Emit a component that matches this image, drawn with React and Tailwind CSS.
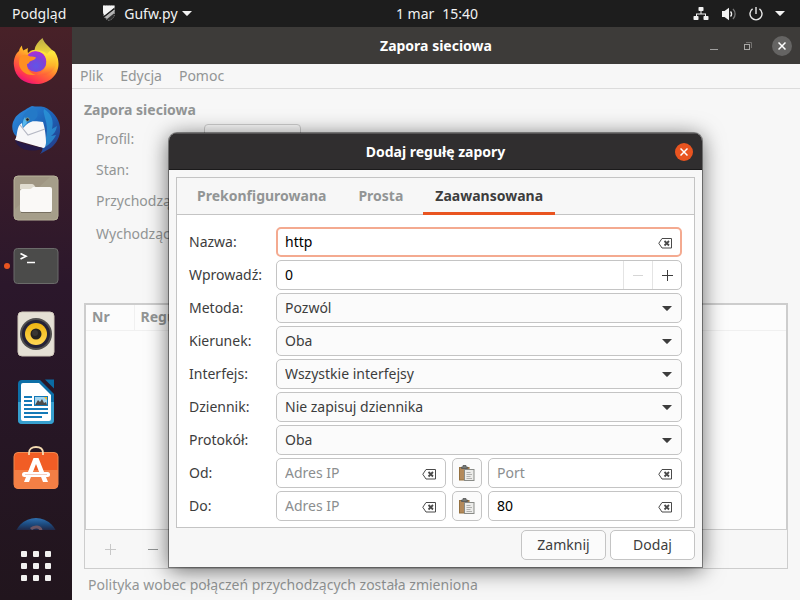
import React from "react";

function Triangle({ className }) {
  return (
    <svg viewBox="0 0 10 5" width="10" height="5" className={className} aria-hidden="true">
      <path d="M0 0h10L5.6 4.6a.8.8 0 0 1-1.2 0z" fill="currentColor" />
    </svg>
  );
}

function ShieldIcon() {
  return (
    <svg viewBox="0 0 14 17" width="14" height="17" aria-hidden="true">
      <path d="M1.500 1h11v8c0 3.500-2.500 5.500-5.500 6.500C4 14.500 1.500 12.500 1.500 9z" fill="#2e2e2e" stroke="#777" strokeWidth="1" strokeDasharray="1.500 1" />
      <path d="M1 .500h11.500v2L2.500 10.500C1.500 9.500 1 8 1 6z" fill="#f4f4f4" />
      <path d="M2.500 12L12.500 4v4L5 14z" fill="#b5b5b5" />
      <path d="M1.500 11.500L12.500 3v1.200L2.200 12.200z" fill="#1d1d1d" />
    </svg>
  );
}

function NetworkIcon() {
  return (
    <svg viewBox="0 0 16 14" width="16" height="14" fill="#f2f2f2" aria-hidden="true">
      <rect x="5.500" y="0" width="5" height="4" rx=".8" />
      <rect x="0.500" y="9" width="5" height="4" rx=".8" />
      <rect x="10.500" y="9" width="5" height="4" rx=".8" />
      <path d="M7.500 4h1v2.500H13v2.500h-1V7.500H4V9H3V6.500h4.500z" />
    </svg>
  );
}

function VolumeIcon() {
  return (
    <svg viewBox="0 0 16 14" width="16" height="14" aria-hidden="true">
      <path d="M1 4h2.500L8 .8v12.400L3.500 10H1z" fill="#f2f2f2" />
      <path d="M9.500 4.500a3.500 3.500 0 0 1 0 5" fill="none" stroke="#f2f2f2" strokeWidth="1.400" />
      <path d="M12 2a7 7 0 0 1 0 10" fill="none" stroke="#777" strokeWidth="1.300" />
    </svg>
  );
}

function PowerIcon() {
  return (
    <svg viewBox="0 0 14 14" width="14" height="14" fill="none" stroke="#e8e8e8" strokeWidth="1.400" aria-hidden="true">
      <path d="M7 0v7M3.600 1.900a6 6 0 1 0 6.800 0" />
    </svg>
  );
}

function CloseCross() {
  return (
    <svg viewBox="0 0 8 8" width="8" height="8" stroke="#fff" strokeWidth="1.500" aria-hidden="true">
      <path d="M.5.5l7 7M7.500.5l-7 7" />
    </svg>
  );
}

function ClearIcon() {
  return (
    <svg viewBox="0 0 14 11" width="14" height="11" aria-hidden="true">
      <path d="M4 .5h9.500v9.500H4L.8 5.250z" fill="none" stroke="#4a4a4a" strokeWidth="1" />
      <path d="M6.500 3l4.500 4.500M11 3L6.500 7.500" stroke="#4a4a4a" strokeWidth="1.800" />
    </svg>
  );
}

function PasteIcon() {
  return (
    <svg viewBox="0 0 16 17" width="16" height="17" aria-hidden="true">
      <rect x=".5" y="2.500" width="9.500" height="12.500" fill="#b3895a" stroke="#94703f" />
      <path d="M2.500 3.500V2h1.500V.5h3V2h1.500v1.500z" fill="#777c78" stroke="#555" strokeWidth=".8" />
      <rect x="5.500" y="4.500" width="9.500" height="11" fill="#ececea" stroke="#898b87" />
      <path d="M7.500 7.500h4M7.500 9.500h5.500M7.500 11.500h4M7.500 13.500h5.500" stroke="#b0b0ae" strokeWidth="1" />
    </svg>
  );
}

function FirefoxIcon() {
  return (
    <svg viewBox="0 0 48 48" width="48" height="48" aria-hidden="true">
      <defs>
        <linearGradient id="ffBody" x1=".85" y1=".05" x2=".25" y2="1">
          <stop offset="0" stopColor="#fff14a" />
          <stop offset=".3" stopColor="#ffc328" />
          <stop offset=".58" stopColor="#ff6f33" />
          <stop offset=".82" stopColor="#ff3650" />
          <stop offset="1" stopColor="#e80a82" />
        </linearGradient>
        <radialGradient id="ffGlobe" cx=".5" cy=".7" r=".7">
          <stop offset="0" stopColor="#5f55e8" />
          <stop offset=".55" stopColor="#7d43d8" />
          <stop offset="1" stopColor="#b02bd8" />
        </radialGradient>
        <linearGradient id="ffFlame" x1="0" y1="0" x2="0" y2="1">
          <stop offset="0" stopColor="#c9bd4a" />
          <stop offset=".4" stopColor="#ffe83d" />
          <stop offset=".75" stopColor="#ffb12b" />
          <stop offset="1" stopColor="#ff5a3c" />
        </linearGradient>
      </defs>
      <path d="M10 7.500c0 2 .4 3.500 1.500 5C13 11.500 14 11 16 10c-.5 2-.5 3.500 0 5 6-5 14-3 19 1 3-4 5-5 8-2 1.500 3 3.500 6 3.500 12C46.500 38 36 46 24.500 46 12 46 3 39 2 28 1 21 4 15 7 13c.3-2 1.500-4 3-5.500z" fill="url(#ffBody)" />
      <circle cx="24" cy="23.500" r="10.500" fill="url(#ffGlobe)" />
      <path d="M9 18c4-2.500 7-1 9 .5 2.500 0 5 .2 6 1-.5 2-4 3-6 4-1 1-1.500 2.500-3 2.500 0 6 4 10 9 10.500C15 39 8 33 7 26c0-3 0-6 2-8z" fill="#ff8f22" />
      <path d="M30.500 0C26 3.500 23 7.500 22.500 12c-2 0-4 .5-5 1.500 8-2 15 1 16.500 7 2 9-3 14-10 16 10 3 20-3 20.500-13 .5-6-2-9-5-12-3-3.500-7-6-9-11.500z" fill="url(#ffFlame)" opacity=".9" />
    </svg>
  );
}

function ThunderbirdIcon() {
  return (
    <svg viewBox="0 0 48 48" width="48" height="48" aria-hidden="true">
      <defs>
        <linearGradient id="tbBody" x1="0" y1="0" x2="1" y2="1">
          <stop offset="0" stopColor="#2f8fe0" />
          <stop offset=".5" stopColor="#1d64b9" />
          <stop offset="1" stopColor="#26347f" />
        </linearGradient>
      </defs>
      <path d="M20 0c4 1 8 0 12 1 8 3 15 11 16 20 1 9-4 18-11 22l-9 5c3-3 3-7 2-10L4 30C0 27-1 19 2 14c2-5 7-8 11-10 2-2 5-3 7-4z" fill="url(#tbBody)" />
      <path d="M32 3c8 5 10 12 8 20l5-3c-1 5-3 8-6 10l5-1c-3 6-7 10-14 14 4-8 7-19 3-31-1-4-2-7-1-9z" fill="#2c9bdc" opacity=".7" />
      <path d="M10 17c6-2 15-2 21-1 2 6 3 15 3 21-.5 3-1 5-3 5L3 34c3-5 1-14 7-17z" fill="#f7f7f9" />
      <path d="M8 19l8 10 17-6" fill="none" stroke="#b5b8c4" strokeWidth="1.200" />
      <path d="M20 2c5 0 7 5 5 9-2 4-8 5-11 8l-3 3c-2-5-1-12 3-16 2-2 4-3 6-4z" fill="#2479c7" />
      <path d="M13 11c-2 3-3 6-2 10l4-4z" fill="#57b7ec" />
      <circle cx="15.500" cy="13.500" r="1.600" fill="#0d1a38" stroke="#d8c45a" strokeWidth=".5" />
      <path d="M3 34c8 4 18 6 28 8l-1 1C16 47 6 43 3 34z" fill="#251a48" />
    </svg>
  );
}

function FilesIcon() {
  return (
    <svg viewBox="0 0 48 48" width="48" height="48" aria-hidden="true">
      <rect x="2" y="2" width="44" height="44" rx="4" fill="#9f9683" stroke="#b9b49b" />
      <path d="M2 36L38 3h6q2 0 2 2v38q0 3-3 3H5q-3 0-3-3z" fill="#aaa390" opacity=".6" />
      <path d="M8 14v-3q0-1 1-1h11q1 0 2 1l3 4H8z" fill="#e0dcd0" />
      <path d="M8 17q0-2 2-2h8q1 0 2-1l1-1h17q2 0 2 2v21q0 2-2 2H10q-2 0-2-2z" fill="#faf9f7" />
      <path d="M9 38.500h30" stroke="#777061" />
    </svg>
  );
}

function TerminalIcon() {
  return (
    <svg viewBox="0 0 48 48" width="48" height="48" aria-hidden="true">
      <rect x="2" y="6.500" width="44" height="35" rx="3.500" fill="#4b4b4a" stroke="#6b6b6a" />
      <path d="M8.500 11.500L14 14.300l-5.500 2.800" fill="none" stroke="#fff" strokeWidth="1.700" />
      <path d="M15 20.500h8" stroke="#fff" strokeWidth="1.500" />
    </svg>
  );
}

function RhythmboxIcon() {
  return (
    <svg viewBox="0 0 48 48" width="48" height="48" aria-hidden="true">
      <defs>
        <linearGradient id="rbCone" x1="0" y1="0" x2="0" y2="1">
          <stop offset="0" stopColor="#eeb411" />
          <stop offset="1" stopColor="#ffd755" />
        </linearGradient>
      </defs>
      <rect x="6" y="2" width="36" height="44" rx="4" fill="#e5e0d5" stroke="#d2cabc" />
      <circle cx="24" cy="24" r="16" fill="#514f4e" />
      <circle cx="24" cy="24" r="14" fill="#252337" />
      <circle cx="24" cy="24" r="11" fill="url(#rbCone)" />
      <circle cx="24" cy="24" r="5.500" fill="#252320" />
      <circle cx="23" cy="23" r="3" fill="#393633" />
    </svg>
  );
}

function WriterIcon() {
  return (
    <svg viewBox="0 1 48 48" width="48" height="48" aria-hidden="true">
      <path d="M10 3h18l14 14v26q0 4-4 4H10q-4 0-4-4V7q0-4 4-4z" fill="#0d6fa7" />
      <path d="M6 25h36v18q0 4-4 4H10q-4 0-4-4z" fill="#379fce" />
      <path d="M33 2.500h9v9z" fill="#0a6ba3" />
      <path d="M11 6h16l12 12v24q0 2-2 2H11q-2 0-2-2V8q0-2 2-2z" fill="#fff" />
      <path d="M12 20h8M12 24h8M12 28h8M12 32h24M12 36h24M12 40h18" stroke="#147ab8" strokeWidth="2" />
      <rect x="22" y="19" width="14" height="10" fill="#147ab8" />
      <path d="M23 20h12v8H23z" fill="#a5d5ee" />
      <path d="M23 28l3-5 2 2 2-3 2 4 2-1 1 3z" fill="#4b4b4b" />
      <path d="M32 20h3v3z" fill="#f4ba24" />
    </svg>
  );
}

function SoftwareIcon() {
  return (
    <svg viewBox="0 2 48 48" width="48" height="48" aria-hidden="true">
      <rect x="2" y="8.500" width="44" height="36" rx="4" fill="#f15d25" stroke="#ee8a50" />
      <path d="M2 26h44v14.500q0 4-4 4H6q-4 0-4-4z" fill="#f37f45" />
      <path d="M17 11V9c0-4 3-6 7-6s7 2 7 6v2" fill="none" stroke="#f4dab1" strokeWidth="1.800" />
      <path d="M21.500 14h5l9.500 24h-5L24 20l-7 18h-5z" fill="#fff" />
      <rect x="10" y="28" width="28" height="5" rx="2.500" fill="#fff" />
      <path d="M13 30.500h22" stroke="#f3cdc0" />
    </svg>
  );
}

function HelpIcon() {
  return (
    <svg viewBox="0 0 48 48" width="48" height="48" aria-hidden="true">
      <defs>
        <linearGradient id="hpBody" x1="0" y1="0" x2="0" y2="1">
          <stop offset="0" stopColor="#2f6fae" />
          <stop offset=".14" stopColor="#1c4b80" />
          <stop offset=".34" stopColor="#22162a" />
        </linearGradient>
      </defs>
      <circle cx="24" cy="26" r="22" fill="url(#hpBody)" />
      <path d="M19 15c3-3 10-3 10 2" fill="none" stroke="#6b5564" strokeWidth="3" />
    </svg>
  );
}

const dockItems = [
  { name: "Firefox", icon: <FirefoxIcon /> },
  { name: "Thunderbird", icon: <ThunderbirdIcon /> },
  { name: "Pliki", icon: <FilesIcon /> },
  { name: "Terminal", icon: <TerminalIcon />, running: true },
  { name: "Rhythmbox", icon: <RhythmboxIcon /> },
  { name: "LibreOffice Writer", icon: <WriterIcon /> },
  { name: "Ubuntu Software", icon: <SoftwareIcon /> },
  { name: "Pomoc", icon: <HelpIcon /> },
];

function TopPanel() {
  return (
    <header className="grid h-[27px] shrink-0 grid-cols-[1fr_auto_1fr] items-center bg-[#1d1d1d] px-3 text-[#f2f2f2]">
      <div className="flex items-center gap-9">
        <button type="button">Podgląd</button>
        <button type="button" className="flex items-center gap-1">
          <ShieldIcon />
          <span className="ml-1">Gufw.py</span>
          <Triangle />
        </button>
      </div>
      <time className="ml-[74px] flex gap-2">
        <span>1 mar</span>
        <span>15:40</span>
      </time>
      <button type="button" aria-label="Menu systemowe" className="flex items-center gap-3 justify-self-end">
        <NetworkIcon />
        <VolumeIcon />
        <PowerIcon />
        <Triangle className="mr-[3px]" />
      </button>
    </header>
  );
}

function Dock() {
  return (
    <nav className="flex w-[72px] shrink-0 flex-col bg-linear-to-b from-[#482128] via-[#2b172b] via-45% to-[#21151d]">
      <ul className="flex min-h-0 flex-1 flex-col gap-5 overflow-hidden pt-[11px]">
        {dockItems.map((item) => (
          <li key={item.name} className="relative flex h-12 shrink-0 justify-center">
            {item.running && <span className="absolute top-[21px] left-1 size-1.5 rounded-full bg-[#e95420]" />}
            <button type="button" aria-label={item.name}>{item.icon}</button>
          </li>
        ))}
      </ul>
      <button type="button" aria-label="Pokaż programy" className="flex h-[70px] items-start justify-center pt-[21px]">
        <span className="grid grid-cols-3 gap-1.5">
          {[0, 1, 2, 3, 4, 5, 6, 7, 8].map((n) => (
            <span key={n} className="size-1.5 rounded-[1px] bg-[#f2f1f0]" />
          ))}
        </span>
      </button>
    </nav>
  );
}

function MainWindow() {
  return (
    <main className="flex min-w-0 flex-1 flex-col bg-[#f7f7f7] text-[#929595]">
      <div className="grid h-[37px] shrink-0 grid-cols-[1fr_auto_1fr] items-center bg-[#3d3b39] px-2 text-white">
        <h1 className="col-start-2 font-bold">Zapora sieciowa</h1>
        <div className="flex items-center gap-6 justify-self-end">
          <button type="button" aria-label="Minimalizuj" className="flex h-3 w-2.5 items-end pb-0.5">
            <span className="h-px w-2 bg-[#a09f9e]" />
          </button>
          <button type="button" aria-label="Przywróć">
            <svg viewBox="0 0 8 8" width="8" height="8" fill="none" aria-hidden="true">
              <path d="M2 .5h5.500V6" stroke="#747270" />
              <rect x=".5" y="2.500" width="5" height="5" stroke="#a9a8a6" />
            </svg>
          </button>
          <button type="button" aria-label="Zamknij okno" className="-ml-1 flex size-5 items-center justify-center rounded-full bg-[#656463]">
            <CloseCross />
          </button>
        </div>
      </div>
      <div className="flex h-[25px] shrink-0 items-center gap-[17px] border-b border-[#dcdcdc] px-2">
        <button type="button">Plik</button>
        <button type="button">Edycja</button>
        <button type="button">Pomoc</button>
      </div>
      <section className="flex min-h-0 flex-1 flex-col px-3 pt-[11px]">
        <h2 className="leading-5 font-bold">Zapora sieciowa</h2>
        <div className="grid grid-cols-[108px_97px] grid-rows-[31px_31px_31px_35px] items-center pt-[3px] pl-3">
          <label htmlFor="profile">Profil:</label>
          <select id="profile" defaultValue="Publiczny" className="h-[30px] w-full appearance-none rounded-sm border border-[#cdcdcd] bg-[#fafafa] px-2">
            <option>Publiczny</option>
          </select>
          <span className="col-span-2">Stan:</span>
          <span className="col-span-2">Przychodzące:</span>
          <span className="col-span-2">Wychodzące:</span>
        </div>
        <div className="mt-[52px] flex min-h-0 flex-1 flex-col border-2 border-b border-[#cdcdcd] bg-[#fcfcfc]">
          <table className="w-full border-collapse text-left">
            <thead>
              <tr className="h-[25px] border-b border-[#f0f0f0]">
                <th className="w-12 border-r border-[#f0f0f0] px-1.5">Nr</th>
                <th className="px-1.5">Reguła</th>
              </tr>
            </thead>
          </table>
        </div>
        <div className="flex h-[39px] shrink-0 items-center gap-8 border border-t-0 border-[#cdcdcd] px-5">
          <button type="button" aria-label="Dodaj regułę">
            <svg viewBox="0 0 11 11" width="11" height="11" stroke="#c8c8c8" aria-hidden="true">
              <path d="M0 5.500h11M5.500 0v11" />
            </svg>
          </button>
          <button type="button" aria-label="Usuń regułę" className="flex h-3 items-center">
            <span className="h-px w-2.5 bg-[#929595]" />
          </button>
        </div>
        <p className="flex h-[31px] shrink-0 items-center px-1">Polityka wobec połączeń przychodzących została zmieniona</p>
      </section>
    </main>
  );
}

function Entry({ id, label, value, placeholder, focused }) {
  return (
    <div
      className={
        focused
          ? "flex h-[30px] items-center rounded-[5px] border-2 border-[#f4aa90] bg-white pr-2"
          : "flex h-[30px] items-center rounded-[5px] border border-[#c4c4c4] bg-white pr-[9px]"
      }
    >
      <input
        id={id}
        aria-label={label}
        type="text"
        defaultValue={value}
        placeholder={placeholder}
        className={
          focused
            ? "min-w-0 flex-1 bg-transparent pl-[7px] text-black outline-none placeholder:text-[#8b8e8f]"
            : "min-w-0 flex-1 bg-transparent pl-2 text-black outline-none placeholder:text-[#8b8e8f]"
        }
      />
      <button type="button" aria-label="Wyczyść" className="pt-0.5">
        <ClearIcon />
      </button>
    </div>
  );
}

function Choice({ id, value }) {
  return (
    <div className="grid">
      <select
        id={id}
        defaultValue={value}
        className="col-start-1 row-start-1 h-[30px] w-full appearance-none rounded-[5px] border border-[#c4c4c4] bg-[#fbfbfb] px-2 text-[#3d3d3d]"
      >
        <option>{value}</option>
      </select>
      <Triangle className="pointer-events-none col-start-1 row-start-1 mr-[10px] self-center justify-self-end text-[#3d3d3d]" />
    </div>
  );
}

const choices = [
  { id: "policy", label: "Metoda:", value: "Pozwól" },
  { id: "direction", label: "Kierunek:", value: "Oba" },
  { id: "interface", label: "Interfejs:", value: "Wszystkie interfejsy" },
  { id: "log", label: "Dziennik:", value: "Nie zapisuj dziennika" },
  { id: "protocol", label: "Protokół:", value: "Oba" },
];

function AddressRow({ id, label, port }) {
  return (
    <>
      <label htmlFor={id}>{label}</label>
      <div className="grid grid-cols-[170px_30px_minmax(0,1fr)] gap-1.5">
        <Entry id={id} placeholder="Adres IP" />
        <button type="button" aria-label="Wklej adres IP" className="flex h-[30px] items-center justify-center rounded-[5px] border border-[#c4c4c4] bg-[#fbfbfb]">
          <PasteIcon />
        </button>
        <Entry label={label + " port"} value={port} placeholder="Port" />
      </div>
    </>
  );
}

function RuleDialog() {
  return (
    <div
      role="dialog"
      aria-labelledby="rule-title"
      className="absolute top-[133px] left-[169px] w-[533px] overflow-hidden rounded-t-lg bg-[#f7f7f7] text-[#3d3d3d] shadow-[0_0_0_1px_rgba(0,0,0,0.4),0_3px_22px_rgba(0,0,0,0.6)]"
    >
      <div className="grid h-[37px] grid-cols-[1fr_auto_1fr] items-center border-t border-b border-t-[#555354] border-b-[#1b1a1b] bg-[#302e2f] px-[9px] text-white">
        <h2 id="rule-title" className="col-start-2 font-bold">Dodaj regułę zapory</h2>
        <button type="button" aria-label="Zamknij okno" className="flex size-[18px] items-center justify-center justify-self-end rounded-full bg-[#e95420]">
          <CloseCross />
        </button>
      </div>
      <div className="p-[7px]">
        <div className="border border-[#c4c4c4] bg-white">
          <div role="tablist" className="flex h-[37px] items-stretch border-b border-[#c4c4c4] bg-[#f7f7f7] pl-2 font-bold text-[#929595]">
            <button type="button" role="tab" aria-selected="false" className="px-3">Prekonfigurowana</button>
            <button type="button" role="tab" aria-selected="false" className="ml-2 px-3">Prosta</button>
            <button type="button" role="tab" aria-selected="true" className="-mb-px ml-2 border-b-3 border-[#e95420] px-3 pt-0.5 text-[#3d3d3d]">Zaawansowana</button>
          </div>
          <div className="grid grid-cols-[87px_minmax(0,1fr)] items-center gap-y-[3px] pt-3 pr-3 pb-1.5 pl-3">
            <label htmlFor="name">Nazwa:</label>
            <Entry id="name" value="http" focused />
            <label htmlFor="insert">Wprowadź:</label>
            <div className="flex h-[30px] overflow-hidden rounded-[5px] border border-[#c4c4c4] bg-white">
              <input id="insert" type="text" inputMode="numeric" defaultValue="0" className="min-w-0 flex-1 pl-2 text-black outline-none" />
              <button type="button" aria-label="Zmniejsz" className="flex w-[29px] items-center justify-center border-l border-[#e4e4e4]">
                <span className="h-px w-2.5 bg-[#d6d6d6]" />
              </button>
              <button type="button" aria-label="Zwiększ" className="flex w-[29px] items-center justify-center border-l border-[#e4e4e4]">
                <svg viewBox="0 0 11 11" width="11" height="11" stroke="#3d3d3d" aria-hidden="true">
                  <path d="M0 5.500h11M5.500 0v11" />
                </svg>
              </button>
            </div>
            {choices.map((c) => (
              <React.Fragment key={c.id}>
                <label htmlFor={c.id}>{c.label}</label>
                <Choice id={c.id} value={c.value} />
              </React.Fragment>
            ))}
            <AddressRow id="from" label="Od:" />
            <AddressRow id="to" label="Do:" port="80" />
          </div>
        </div>
        <div className="mt-0.5 flex justify-end gap-1">
          <button type="button" className="h-[30px] w-[85px] rounded-[5px] border border-[#c4c4c4] bg-[#fbfbfb]">Zamknij</button>
          <button type="button" className="h-[30px] w-[85px] rounded-[5px] border border-[#c4c4c4] bg-white">Dodaj</button>
        </div>
      </div>
    </div>
  );
}

export default function App() {
  return (
    <div className="relative flex h-screen flex-col overflow-hidden font-['Noto_Sans',sans-serif] text-[14px] leading-5">
      <TopPanel />
      <div className="flex min-h-0 flex-1">
        <Dock />
        <MainWindow />
      </div>
      <RuleDialog />
    </div>
  );
}
